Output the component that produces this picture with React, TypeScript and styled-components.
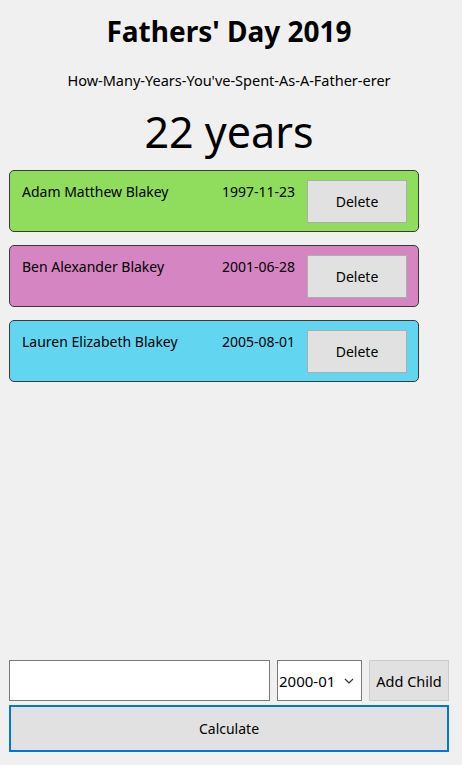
import React from "react";
import styled, { createGlobalStyle } from "styled-components";

const Global = createGlobalStyle`
  html, body { margin: 0; padding: 0; background: #f0f0f0; }
  body { font-family: "Noto Sans", "Open Sans", sans-serif; color: #000; }
`;

const Page = styled.div`
  height: 765px;
  box-sizing: border-box;
  display: flex;
  flex-direction: column;
  padding: 0 13px 13px 9px;
`;

const Header = styled.header`
  display: flex;
  flex-direction: column;
  align-items: center;
`;

const Title = styled.h1`
  margin: 12px 0 0;
  font-size: 28px;
  font-weight: 700;
  line-height: 38px;
`;

const Subtitle = styled.div`
  margin-top: 20px;
  font-size: 14.5px;
  line-height: 20px;
`;

const Result = styled.div`
  margin-top: 16px;
  font-size: 43px;
  line-height: 52px;
`;

const List = styled.div`
  display: flex;
  flex-direction: column;
  gap: 13px;
  margin-top: 12px;
  width: 410px;
`;

const Card = styled.div<{ $bg: string }>`
  box-sizing: border-box;
  height: 62px;
  background: ${(p) => p.$bg};
  border: 1px solid #3a3a3a;
  border-radius: 5px;
  display: flex;
  align-items: flex-start;
  padding: 9px 11px 0 12px;
`;

const Name = styled.div`
  flex: 1;
  font-size: 14px;
  line-height: 18px;
  margin-top: 3px;
`;

const Born = styled.div`
  font-size: 14px;
  line-height: 18px;
  margin-top: 3px;
  margin-right: 12px;
`;

const GreyButton = styled.button`
  box-sizing: border-box;
  background: #e1e1e1;
  border: 1px solid #adadad;
  font-family: inherit;
  font-size: 14px;
  color: #000;
  padding: 0;
  cursor: pointer;
`;

const DeleteButton = styled(GreyButton)`
  width: 100px;
  height: 43px;
`;

const Spacer = styled.div`
  flex: 1;
`;

const AddRow = styled.div`
  display: flex;
  gap: 7px;
  height: 41px;
`;

const NameInput = styled.input`
  box-sizing: border-box;
  width: 261px;
  height: 41px;
  border: 1px solid #7a7a7a;
  background: #fff;
  outline: none;
`;

const Select = styled.div`
  box-sizing: border-box;
  width: 85px;
  height: 41px;
  border: 1px solid #7a7a7a;
  background: #fff;
  display: flex;
  align-items: center;
  justify-content: space-between;
  padding: 0 7px 0 1px;
  font-size: 15px;
`;

const AddButton = styled(GreyButton)`
  width: 80px;
  height: 41px;
  border-color: #cccccc;
  font-size: 14.5px;
`;

const CalcButton = styled(GreyButton)`
  margin-top: 4px;
  height: 47px;
  width: 440px;
  border: 2px solid #0078d7;
`;

const children = [
  { name: "Adam Matthew Blakey", date: "1997-11-23", color: "#90dc5c" },
  { name: "Ben Alexander Blakey", date: "2001-06-28", color: "#d585c1" },
  { name: "Lauren Elizabeth Blakey", date: "2005-08-01", color: "#62d5f0" },
];

export default function App() {
  return (
    <>
      <Global />
      <Page>
        <Header>
          <Title>Fathers' Day 2019</Title>
          <Subtitle>How-Many-Years-You've-Spent-As-A-Father-erer</Subtitle>
          <Result>22 years</Result>
        </Header>
        <List>
          {children.map((c) => (
            <Card key={c.name} $bg={c.color}>
              <Name>{c.name}</Name>
              <Born>{c.date}</Born>
              <DeleteButton>Delete</DeleteButton>
            </Card>
          ))}
        </List>
        <Spacer />
        <AddRow>
          <NameInput />
          <Select>
            <span>2000-01</span>
            <svg width="10" height="6" viewBox="0 0 10 6">
              <path d="M1 1l4 4 4-4" fill="none" stroke="#333" strokeWidth="1.2" />
            </svg>
          </Select>
          <AddButton>Add Child</AddButton>
        </AddRow>
        <CalcButton>Calculate</CalcButton>
      </Page>
    </>
  );
}
